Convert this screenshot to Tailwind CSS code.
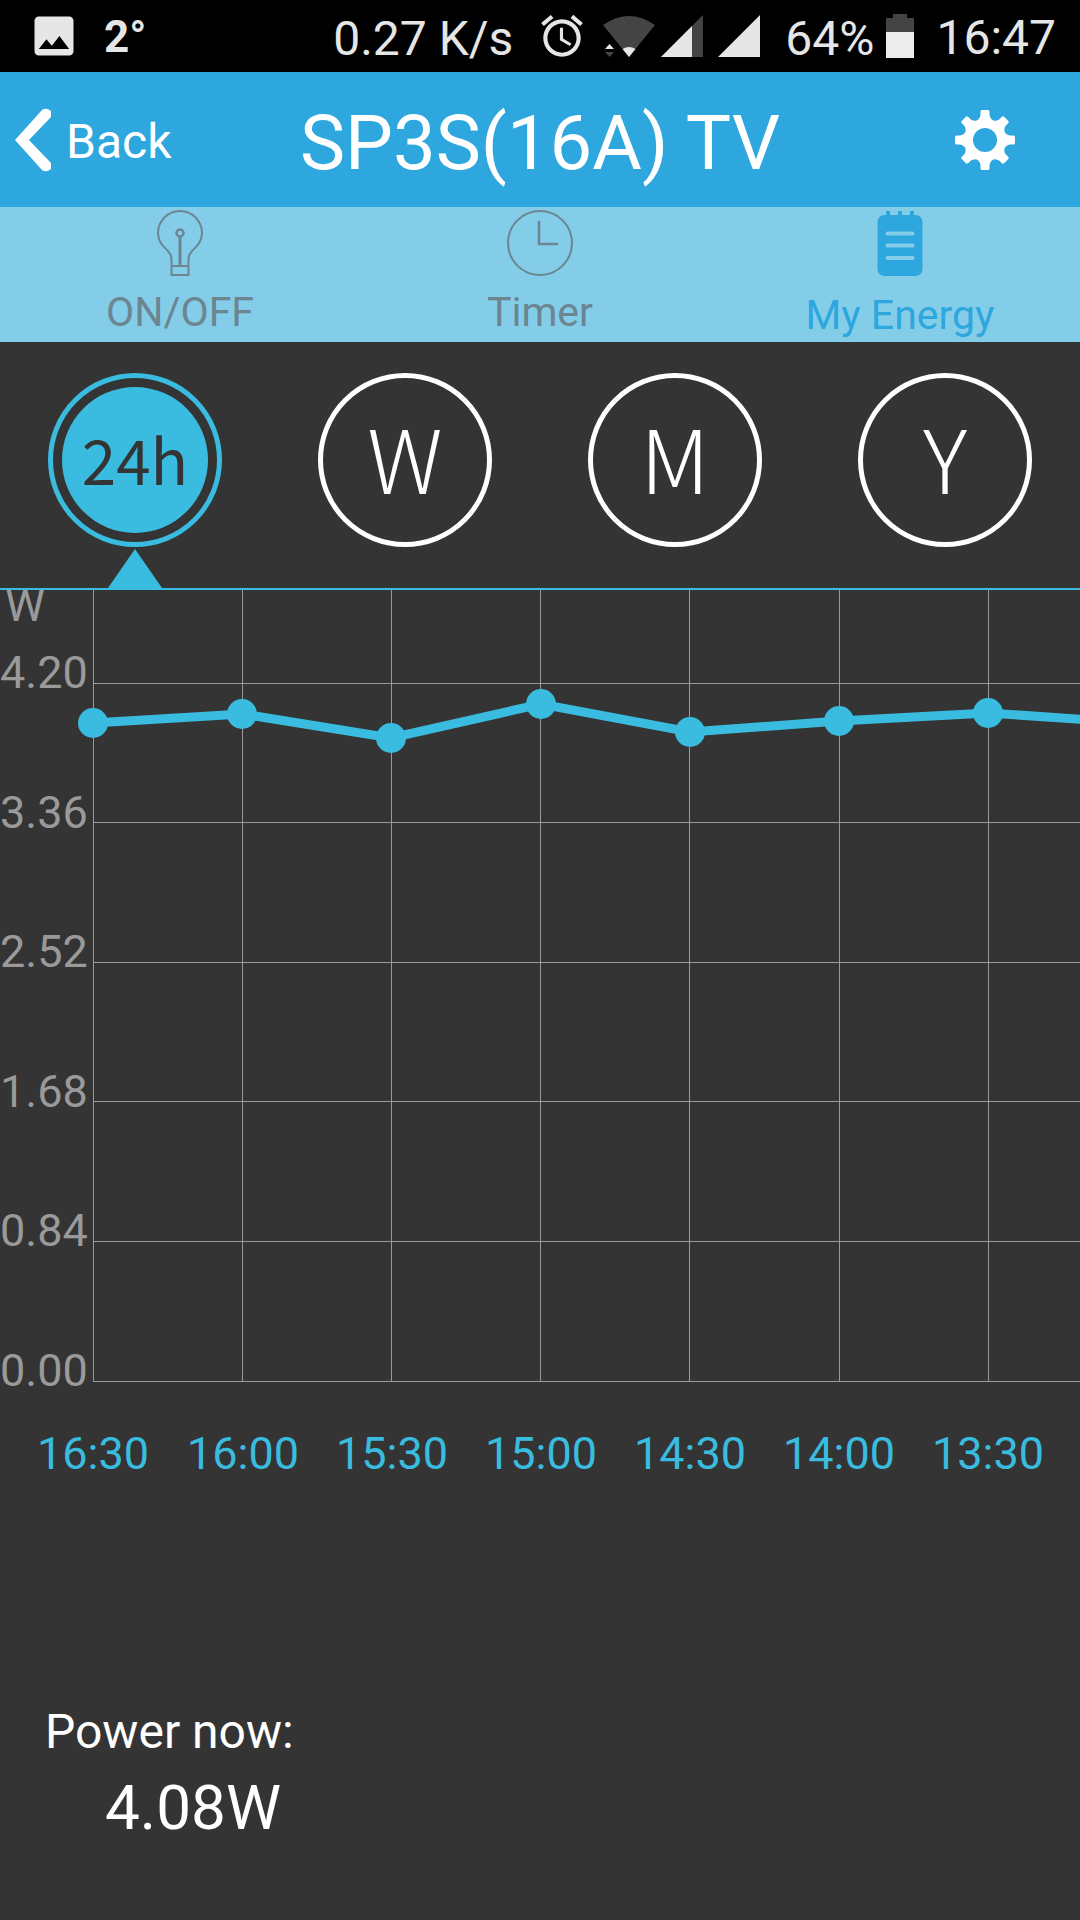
<!DOCTYPE html>
<html lang="en">
  <head>
    <meta charset="UTF-8" />
    <meta name="viewport" content="width=device-width, initial-scale=1.0" />
    <title>SP3S(16A) TV - My Energy</title>
    <script src="https://cdn.jsdelivr.net/npm/@tailwindcss/browser@4"></script>
  </head>
  <body class="min-h-screen bg-[#343434] font-['Roboto',sans-serif] text-white">
    <!-- Status Bar -->
    <div class="flex h-[72px] items-center bg-black pl-7 pr-6 text-[48px] leading-none text-[#e6e6e6]">
      <svg class="size-[52px]" viewBox="0 0 24 24" fill="currentColor">
        <path d="M21 19V5c0-1.100-.9-2-2-2H5c-1.100 0-2 .9-2 2v14c0 1.100.9 2 2 2h14c1.100 0 2-.9 2-2zM8.500 13.500l2.500 3.010L14.500 12l4.500 6H5l3.500-4.500z" />
      </svg>
      <span class="ml-6 pt-0.5 text-[44px] font-bold">2°</span>
      <div class="ml-auto flex items-center">
        <span class="pt-1.5">0.27 K/s</span>
        <svg class="ml-6 size-[50px]" viewBox="0 0 24 24" fill="currentColor">
          <path d="M22 5.720l-4.600-3.860-1.290 1.530 4.600 3.860L22 5.720zM7.880 3.390L6.600 1.860 2 5.710l1.290 1.530 4.590-3.850zM12.500 8H11v6l4.750 2.850.75-1.230-4-2.370V8zM12 4c-4.970 0-9 4.030-9 9s4.020 9 9 9c4.970 0 9-4.030 9-9s-4.030-9-9-9zm0 16c-3.870 0-7-3.130-7-7s3.130-7 7-7 7 3.130 7 7-3.130 7-7 7z" />
        </svg>
        <svg class="ml-4 h-[44px] w-[52px]" viewBox="0 0 52 44">
          <path d="M0 11Q26 -7 52 11L26 43z" fill="#444" />
          <path d="M19.500 35Q26 31 32.500 35L26 43z" fill="#e6e6e6" />
          <path d="M2 35l4.500-5 4.500 5z" fill="#e6e6e6" />
          <path d="M2 38h9l-4.500 5z" fill="#444" />
        </svg>
        <svg class="ml-1.5 size-[44px]" viewBox="0 0 44 44">
          <path d="M0 43L42 1v42z" fill="#444" />
          <path d="M0 43L31 12v31z" fill="currentColor" />
        </svg>
        <svg class="ml-3 size-[44px]" viewBox="0 0 44 44">
          <path d="M1 43L43 1v42z" fill="currentColor" />
        </svg>
        <span class="ml-6 pt-1.5">64%</span>
        <svg class="ml-3 h-[44px] w-[28px]" viewBox="0 0 28 44">
          <path d="M7 0h14v4h7v40H0V4h7z" fill="#444" />
          <path d="M0 18h28v26H0z" fill="#ececec" />
        </svg>
        <span class="ml-[22px] pt-1">16:47</span>
      </div>
    </div>

    <!-- Header -->
    <header class="relative flex h-[135px] items-center justify-between bg-[#2da7de] pl-[14px] pr-[64px]">
      <button type="button" class="flex items-center gap-[14px] text-[48px] leading-none">
        <svg class="h-[64px] w-[38px]" viewBox="0 0 38 64" fill="#fff">
          <path d="M1 32L28 2Q32 -1 37 3V9L15 32L37 55V61Q32 65 28 62z" />
        </svg>
        <span class="pt-1">Back</span>
      </button>
      <h1 class="pointer-events-none absolute inset-x-0 pt-[6px] text-center text-[76px] leading-none">SP3S(16A) TV</h1>
      <button type="button" aria-label="Settings">
        <svg class="size-[62px]" viewBox="-31 -31 62 62" fill="#fff">
          <defs>
            <path id="tooth" d="M-10 -18Q-5 -21 -4.500 -25V-28Q-4.500 -30 -3 -30H3Q4.500 -30 4.500 -28V-25Q5 -21 10 -18z" />
          </defs>
          <circle r="16.500" fill="none" stroke="#fff" stroke-width="9" />
          <use href="#tooth" />
          <use href="#tooth" transform="rotate(45)" />
          <use href="#tooth" transform="rotate(90)" />
          <use href="#tooth" transform="rotate(135)" />
          <use href="#tooth" transform="rotate(180)" />
          <use href="#tooth" transform="rotate(225)" />
          <use href="#tooth" transform="rotate(270)" />
          <use href="#tooth" transform="rotate(315)" />
        </svg>
      </button>
    </header>

    <!-- Tabs -->
    <nav class="grid h-[135px] grid-cols-3 bg-[#84cde9] pt-[3px] text-[41px] leading-[48px] text-[#6b8690]">
      <a href="#onoff" class="flex flex-col items-center gap-[12px]">
        <svg class="h-[66px] w-[46px]" viewBox="0 0 46 66" fill="none" stroke="currentColor" stroke-width="2">
          <path d="M14.500 65V50C14.500 44 12 42 8 38A21.500 21.500 0 0 1 1 23a22 22 0 0 1 44 0A21.500 21.500 0 0 1 38 38C34 42 31.500 44 31.500 50V65zM14.500 56H31.500" />
          <circle cx="23" cy="23" r="3.500" stroke-width="2.500" />
          <path d="M23 27V56" stroke-width="3" />
        </svg>
        ON/OFF
      </a>
      <a href="#timer" class="flex flex-col items-center gap-[12px]">
        <svg class="size-[66px]" viewBox="0 0 66 66" fill="none" stroke="currentColor" stroke-width="2">
          <circle cx="33" cy="33" r="32" />
          <path d="M32 12V34H50" stroke-width="2.500" stroke-linecap="round" />
        </svg>
        Timer
      </a>
      <a href="#energy" class="flex flex-col items-center gap-[15px] text-[#2da7de]">
        <svg class="h-[66px] w-[46px]" viewBox="0 0 46 66" fill="currentColor">
          <rect x="0.500" y="5" width="45" height="61" rx="7" />
          <path d="M9 1h4v5H9zM21 1h4v5h-4zM33 1h4v5h-4z" />
          <path d="M10.500 23.500H35.500M10.500 35.500H35.500M10.500 48H35.500" stroke="#84cde9" stroke-width="4" stroke-linecap="round" />
        </svg>
        My Energy
      </a>
    </nav>

    <!-- Period Selector -->
    <div class="grid h-[248px] grid-cols-4 justify-items-center border-b-2 border-[#39bcdf] pt-[31px] font-['Noto_Sans_CJK_SC',sans-serif] text-[88px] font-light leading-none">
      <div class="flex flex-col items-center gap-[2px]">
        <button type="button" class="size-[174px] rounded-full border-[5px] border-[#39bcdf] p-[9px]">
          <span class="flex size-full items-center justify-center rounded-full bg-[#39bcdf] pb-1 text-[62px] font-normal text-[#343434]">24h</span>
        </button>
        <svg class="h-[39px] w-[54px]" viewBox="0 0 54 39" fill="#39bcdf">
          <path d="M27 0L54 39H0z" />
        </svg>
      </div>
      <button type="button" class="flex size-[174px] items-center justify-center rounded-full border-[5px] border-white pb-2">W</button>
      <button type="button" class="flex size-[174px] items-center justify-center rounded-full border-[5px] border-white pb-2">M</button>
      <button type="button" class="flex size-[174px] items-center justify-center rounded-full border-[5px] border-white pb-2">Y</button>
    </div>

    <!-- Energy Chart -->
    <svg class="block w-full" viewBox="0 0 1080 910" font-size="45">
      <path
        d="M93.500 0V792M242.500 0V792M391.500 0V792M540.500 0V792M689.500 0V792M839.500 0V792M988.500 0V792M93 93.500H1080M93 232.500H1080M93 372.500H1080M93 511.500H1080M93 651.500H1080M93 791.500H1080"
        stroke="#9a9a9a"
      />
      <g fill="#9a9a9a">
        <text x="5" y="31">W</text>
        <text x="0" y="98">4.20</text>
        <text x="0" y="238">3.36</text>
        <text x="0" y="377">2.52</text>
        <text x="0" y="517">1.68</text>
        <text x="0" y="656">0.84</text>
        <text x="0" y="796">0.00</text>
      </g>
      <polyline
        points="93,133 242,124 391,148 541,114 690,142 839,131 988,123 1137,133"
        fill="none"
        stroke="#39bcdf"
        stroke-width="9"
      />
      <g fill="#39bcdf">
        <circle cx="93" cy="133" r="15" />
        <circle cx="242" cy="124" r="15" />
        <circle cx="391" cy="148" r="15" />
        <circle cx="541" cy="114" r="15" />
        <circle cx="690" cy="142" r="15" />
        <circle cx="839" cy="131" r="15" />
        <circle cx="988" cy="123" r="15" />
      </g>
      <g fill="#39bcdf" text-anchor="middle">
        <text x="93" y="879">16:30</text>
        <text x="243" y="879">16:00</text>
        <text x="392" y="879">15:30</text>
        <text x="541" y="879">15:00</text>
        <text x="690" y="879">14:30</text>
        <text x="839" y="879">14:00</text>
        <text x="988" y="879">13:30</text>
      </g>
    </svg>

    <!-- Current Power -->
    <div class="pb-10 pl-[45px] pt-[204px]">
      <p class="text-[48px] leading-[56px]">Power now:</p>
      <p class="pl-[60px] pt-3 text-[62px] leading-[72px]">4.08W</p>
    </div>
  </body>
</html>
